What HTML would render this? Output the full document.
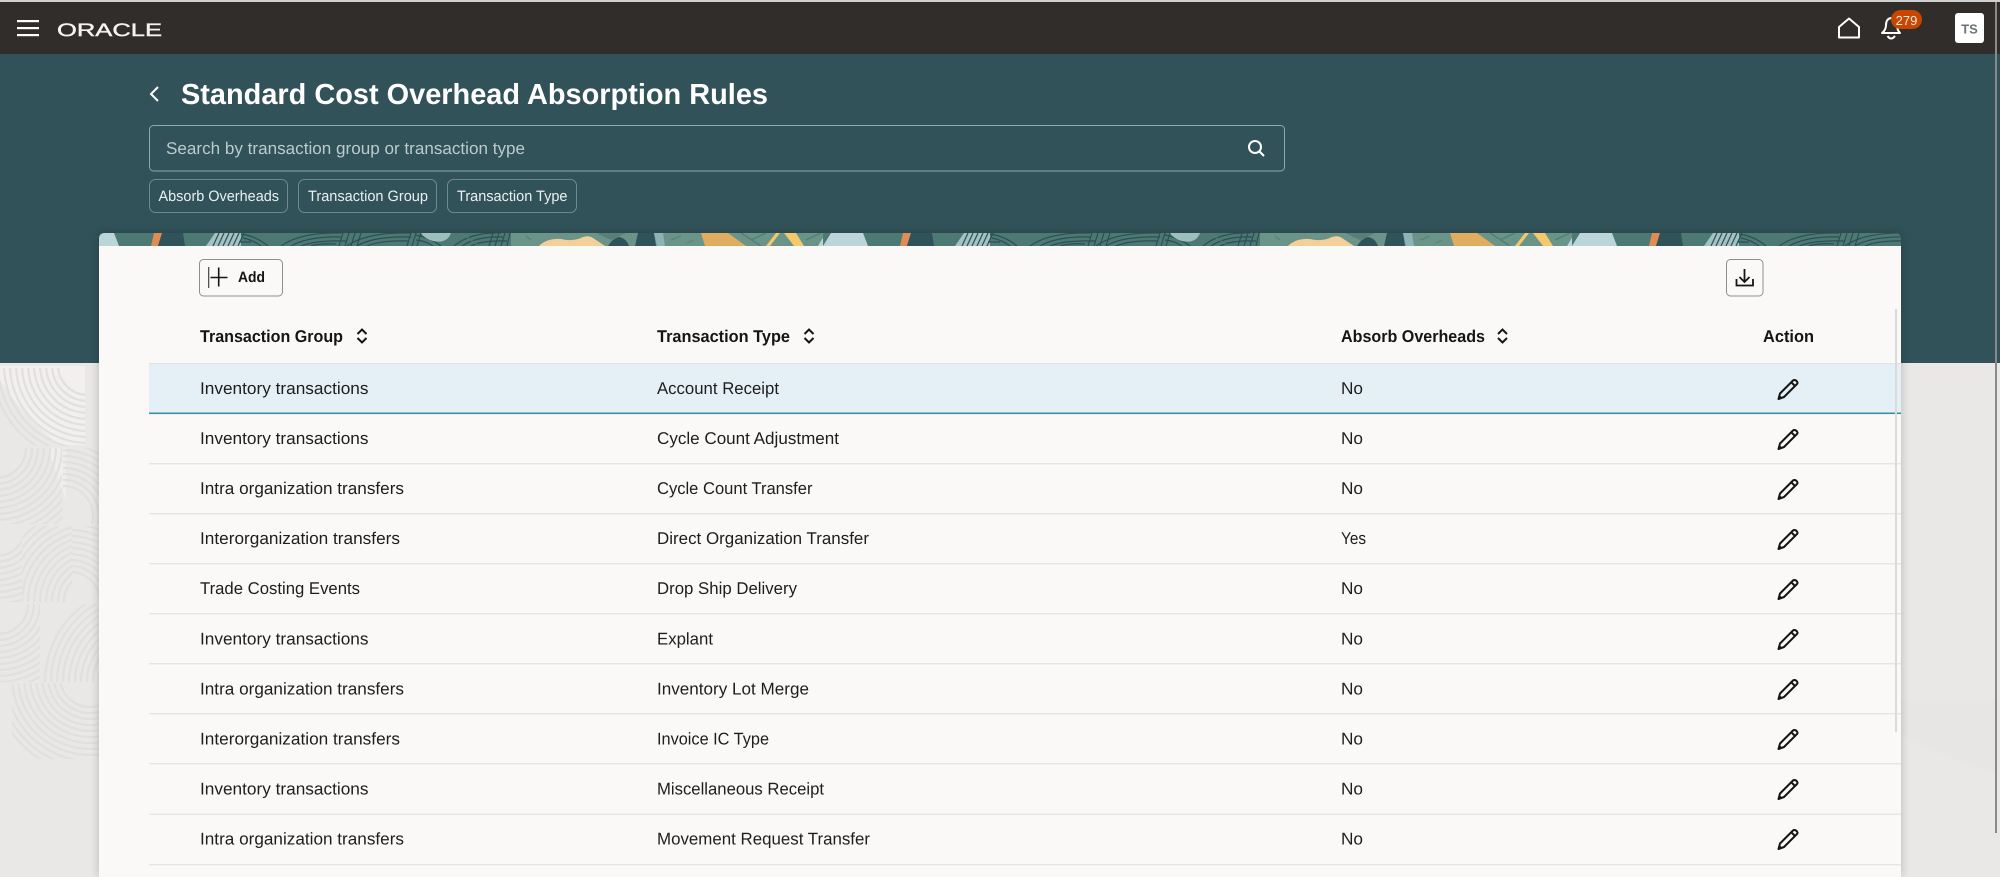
<!DOCTYPE html>
<html lang="en">
<head>
<meta charset="utf-8">
<title>Standard Cost Overhead Absorption Rules</title>
<style>
html,body{margin:0;padding:0;width:2000px;height:877px;overflow:hidden;background:#e9e8e6;font-family:"Liberation Sans",sans-serif}
svg.layer{position:absolute;left:0;top:0;display:block}
text{font-family:"Liberation Sans",sans-serif;text-rendering:geometricPrecision}
.r{font-size:17px;fill:#1f1e1c}
.h{font-size:17px;font-weight:bold;fill:#161513}
.c{font-size:15px;fill:#e9efef}
</style>
</head>
<body>
<svg class="layer" width="2000" height="877" viewBox="0 0 2000 877" xmlns="http://www.w3.org/2000/svg">
<defs>
  <g id="rings" fill="none" stroke="#e1e0de" stroke-width="2.2">
    <circle r="30"/><circle r="36"/><circle r="42"/><circle r="48"/><circle r="54"/><circle r="60"/><circle r="66"/><circle r="72"/><circle r="78"/><circle r="84"/><circle r="90"/><circle r="96"/>
  </g>
  <g id="sort" fill="none" stroke="#161513" stroke-width="2">
    <path d="M-4.5 -2 L0 -6.5 L4.5 -2"/>
    <path d="M-4.5 2 L0 6.5 L4.5 2"/>
  </g>
  <g id="pencil">
    <path d="M-9.5 9.5 L-8 4 L5 -9 Q6.5 -10 8 -9 L9 -8 Q10 -6.5 9 -5.5 L-4 7.5 Z" fill="none" stroke="#161513" stroke-width="2" stroke-linejoin="round"/>
    <path d="M3.5 -7 L7 -3.5" stroke="#161513" stroke-width="2" fill="none"/>
    <path d="M-9.5 9.5 L-8.5 5.5 L-5.5 8.5 Z" fill="#161513"/>
  </g>
  <clipPath id="bannerClip"><path d="M99 246 V239 Q99 233 105 233 H1895 Q1901 233 1901 239 V246 Z"/></clipPath>
  <g id="tile">
    <rect x="823" y="233" width="437" height="13" fill="#4c7a73"/>
    <rect x="1260" y="233" width="313" height="13" fill="#6b9489"/>
    <path d="M831 233 H863 L868 246 H823 Z" fill="#bcd5d8"/>
    <path d="M903 233 H911 L907 246 H900 Z" fill="#e28c55"/>
    <path d="M911 233 H932 L934 246 H907 Z" fill="#2f5358"/>
    <path d="M964 233 H990 V246 H955 Z" fill="#a3c2c1"/>
    <g fill="none" stroke="#2c4f54" stroke-width="1.2">
      <path d="M962 246 L968 233 M967 246 L973 233 M972 246 L978 233 M977 246 L983 233 M982 246 L988 233 M987 246 L993 233"/>
      <path d="M990 234 Q1005 236 1017 246 M992 238 Q1002 240 1010 246 M988 242 H1000"/>
      <path d="M1030 246 Q1050 232 1090 233 M1040 246 Q1058 236 1090 237 M1050 246 Q1065 240 1095 241 M1060 246 Q1070 243 1085 244"/>
      <path d="M1092 233 L1088 246 M1098 233 L1094 246 M1104 233 L1100 246 M1110 233 L1106 246"/>
      <path d="M1096 246 Q1115 232 1160 233 M1106 246 Q1122 236 1160 237 M1116 246 Q1130 240 1158 241"/>
      <path d="M1160 233 L1156 246 M1165 233 L1161 246 M1170 233 L1166 246"/>
      <path d="M1165 235 Q1180 238 1190 246 M1165 240 Q1175 241 1182 246"/>
      <path d="M1203 246 Q1220 232 1250 233 M1211 246 Q1226 236 1252 237 M1220 246 Q1232 240 1256 241"/>
      <path d="M1242 233 L1238 246 M1248 233 L1244 246 M1254 233 L1250 246 M1259 233 L1256 246"/>
    </g>
    <path d="M1170 233 H1200 Q1196 244 1182 241 Q1174 239 1170 233 Z" fill="#9dbfbd"/>
    <path d="M1288 246 Q1296 238 1310 239 Q1322 242 1332 237 Q1338 235 1342 238 Q1348 242 1354 246 Z" fill="#f3cf9a"/>
    <path d="M1357 246 Q1362 238 1368 237 Q1375 238 1378 246 Z" fill="#2f5358"/>
    <path d="M1345 233 H1375 L1360 240 Z" fill="#557f78"/>
    <path d="M1387 233 H1403 L1405 246 H1384 Z" fill="#2f5358"/>
    <path d="M1403 233 H1412 L1414 246 H1406 Z" fill="#8db3b5"/>
    <path d="M1450 233 H1477 L1495 246 H1454 Z" fill="#e0ac60"/>
    <path d="M1515 246 L1525 233 H1529 L1519 246 Z" fill="#f4c86b"/>
    <path d="M1533 233 H1545 L1553 246 H1543 Z" fill="#f4c86b"/>
    <path d="M1500 240 L1515 233 M1490 233 L1510 246 M1555 240 L1570 233" stroke="#517f78" stroke-width="1.5" fill="none"/>
    <path d="M1567 246 L1573 236 V246 Z" fill="#bcd5d8"/>
    <path d="M1210 233 L1228 246 M1275 236 L1280 240 M1420 240 L1430 236 M1436 243 L1442 240" stroke="#517f78" stroke-width="1.5" fill="none" opacity=".7"/>
  </g>
</defs>

<!-- page background -->
<rect width="2000" height="877" fill="#e9e8e6"/>
<path d="M0 366 H85 V445 H60 Q25 420 0 380 Z" fill="#f2f0ee"/>
<path d="M48 448 H66 L66 500 Q58 480 48 448 Z" fill="#f0eeec"/>
<path d="M1901 735 Q1950 760 1996 772 V700 H1901 Z" fill="#e7e6e4"/>
<svg x="0" y="368" width="85" height="78"><use href="#rings" x="88" y="-3"/></svg>
<svg x="0" y="448" width="62" height="76"><use href="#rings" x="-4" y="0"/></svg>
<svg x="63" y="448" width="36" height="76"><use href="#rings" x="0" y="68"/></svg>
<svg x="0" y="526" width="22" height="76"><use href="#rings" x="-4" y="0"/></svg>
<svg x="22" y="526" width="50" height="76"><use href="#rings" x="72" y="76"/></svg>
<svg x="72" y="526" width="27" height="76"><use href="#rings" x="-2" y="76"/></svg>
<svg x="0" y="604" width="40" height="78"><use href="#rings" x="-2" y="0"/></svg>
<svg x="43" y="604" width="56" height="78"><use href="#rings" x="98" y="78"/></svg>
<svg x="12" y="683" width="87" height="76"><use href="#rings" x="78" y="-6"/></svg>

<!-- teal band and header -->
<rect y="0" width="2000" height="363" fill="#315259"/>
<rect y="0" width="2000" height="2" fill="#cfcfcf"/>
<rect y="2" width="2000" height="52" fill="#312d2a"/>

<!-- header -->
<g fill="#fff">
  <rect x="17" y="20" width="22" height="2.2"/>
  <rect x="17" y="27" width="22" height="2.2"/>
  <rect x="17" y="34" width="22" height="2.2"/>
</g>
<text x="57" y="36" font-size="18" fill="#f4f4f4" stroke="#f4f4f4" stroke-width=".4" textLength="105" lengthAdjust="spacingAndGlyphs">ORACLE</text>

<path d="M1839 37.5 V27 L1849 18.5 L1859 27 V37.5 Z" fill="none" stroke="#fff" stroke-width="2" stroke-linejoin="round"/>
<path d="M1882 33 Q1886 30 1886 25 Q1886 19 1891 18 Q1897 19 1897 25 Q1897 30 1900 33 Z" fill="none" stroke="#fff" stroke-width="2" stroke-linejoin="round"/>
<path d="M1887.5 36 Q1891 41 1895 36" fill="none" stroke="#fff" stroke-width="2"/>
<rect x="1891" y="10" width="31" height="19" rx="9.5" fill="#c74600"/>
<text x="1906.5" y="25" font-size="13" fill="#f6e6dc" text-anchor="middle">279</text>
<rect x="1955" y="13" width="29" height="30" rx="3" fill="#fff"/>
<text x="1969.5" y="33.5" font-size="13" font-weight="bold" fill="#6a7578" text-anchor="middle">TS</text>

<!-- title -->
<path d="M158 87 L151 94 L158 101" fill="none" stroke="#fff" stroke-width="2"/>
<text x="181" y="104" font-size="29" font-weight="bold" fill="#fff" textLength="587" lengthAdjust="spacingAndGlyphs">Standard Cost Overhead Absorption Rules</text>

<!-- search -->
<rect x="149.5" y="125.5" width="1135" height="45.5" rx="4" fill="none" stroke="#93a8ab" stroke-width="1"/>
<text x="166" y="154" font-size="17" fill="#bccacc" textLength="359" lengthAdjust="spacingAndGlyphs">Search by transaction group or transaction type</text>
<circle cx="1255" cy="147" r="6" fill="none" stroke="#fff" stroke-width="2"/>
<path d="M1259.5 151.5 L1264 156" stroke="#fff" stroke-width="2"/>

<!-- chips -->
<g fill="none" stroke="#6f8a8e" stroke-width="1">
  <rect x="149.5" y="179.5" width="138" height="33" rx="6"/>
  <rect x="298.5" y="179.5" width="138" height="33" rx="6"/>
  <rect x="447.5" y="179.5" width="129" height="33" rx="6"/>
</g>
<text class="c" x="158.5" y="201" textLength="120.5" lengthAdjust="spacingAndGlyphs">Absorb Overheads</text>
<text class="c" x="308" y="201" textLength="120" lengthAdjust="spacingAndGlyphs">Transaction Group</text>
<text class="c" x="457" y="201" textLength="110.5" lengthAdjust="spacingAndGlyphs">Transaction Type</text>
</svg>

<div style="position:absolute;left:99px;top:233px;width:1802px;height:644px;border-radius:6px 6px 0 0;box-shadow:0 0 9px rgba(0,0,0,.22)"></div>

<svg class="layer" width="2000" height="877" viewBox="0 0 2000 877" xmlns="http://www.w3.org/2000/svg">
<!-- card -->
<g clip-path="url(#bannerClip)">
  <use href="#tile" x="-749"/>
  <use href="#tile"/>
  <use href="#tile" x="749"/>
</g>
<rect x="99" y="246" width="1802" height="631" fill="#fbf9f8"/>

<!-- toolbar -->
<rect x="199.5" y="259.5" width="83" height="36.5" rx="4" fill="none" stroke="#8f8e8b" stroke-width="1"/>
<rect x="208" y="267" width="1.3" height="21" fill="#55524e"/>
<path d="M210.5 277.5 H227.5 M218.7 267.5 V286.5" stroke="#161513" stroke-width="1.6" fill="none"/>
<text x="238" y="282" font-size="15" font-weight="bold" fill="#161513" textLength="27" lengthAdjust="spacingAndGlyphs">Add</text>
<rect x="1726.5" y="259.5" width="36.5" height="36.5" rx="4" fill="none" stroke="#8f8e8b" stroke-width="1"/>
<path d="M1744.5 269 V282 M1739.5 277 L1744.5 282 L1749.5 277" fill="none" stroke="#161513" stroke-width="1.8"/>
<path d="M1736.5 279 V285.5 H1753 V279" fill="none" stroke="#161513" stroke-width="1.8"/>

<!-- table header -->
<text class="h" x="200" y="342" textLength="143" lengthAdjust="spacingAndGlyphs">Transaction Group</text>
<use href="#sort" x="362" y="336"/>
<text class="h" x="657" y="342" textLength="133" lengthAdjust="spacingAndGlyphs">Transaction Type</text>
<use href="#sort" x="809" y="336"/>
<text class="h" x="1341" y="342" textLength="144" lengthAdjust="spacingAndGlyphs">Absorb Overheads</text>
<use href="#sort" x="1502.5" y="336"/>
<text class="h" x="1763" y="342" textLength="51" lengthAdjust="spacingAndGlyphs">Action</text>

<!-- selected row -->
<rect x="149" y="364" width="1752" height="49" fill="#e4f0f6"/>
<rect x="149" y="363" width="1752" height="1" fill="#e3e2df"/>
<rect x="149" y="412.5" width="1752" height="1.6" fill="#3f8ba4"/>

<!-- rules -->
<g fill="#e7e5e2">
  <rect x="149" y="463" width="1752" height="1.4"/>
  <rect x="149" y="513" width="1752" height="1.4"/>
  <rect x="149" y="563" width="1752" height="1.4"/>
  <rect x="149" y="613" width="1752" height="1.4"/>
  <rect x="149" y="663" width="1752" height="1.4"/>
  <rect x="149" y="713" width="1752" height="1.4"/>
  <rect x="149" y="763" width="1752" height="1.4"/>
  <rect x="149" y="813.5" width="1752" height="1.4"/>
  <rect x="149" y="864" width="1752" height="1.4"/>
</g>

<!-- rows -->
<text class="r" x="200" y="394" textLength="168.5" lengthAdjust="spacingAndGlyphs">Inventory transactions</text>
<text class="r" x="657" y="394" textLength="122" lengthAdjust="spacingAndGlyphs">Account Receipt</text>
<text class="r" x="1341" y="394" textLength="22" lengthAdjust="spacingAndGlyphs">No</text>
<use href="#pencil" x="1788" y="389.5"/>

<text class="r" x="200" y="444" textLength="168.5" lengthAdjust="spacingAndGlyphs">Inventory transactions</text>
<text class="r" x="657" y="444" textLength="182" lengthAdjust="spacingAndGlyphs">Cycle Count Adjustment</text>
<text class="r" x="1341" y="444" textLength="22" lengthAdjust="spacingAndGlyphs">No</text>
<use href="#pencil" x="1788" y="439.5"/>

<text class="r" x="200" y="494" textLength="204" lengthAdjust="spacingAndGlyphs">Intra organization transfers</text>
<text class="r" x="657" y="494" textLength="155.5" lengthAdjust="spacingAndGlyphs">Cycle Count Transfer</text>
<text class="r" x="1341" y="494" textLength="22" lengthAdjust="spacingAndGlyphs">No</text>
<use href="#pencil" x="1788" y="489.5"/>

<text class="r" x="200" y="544" textLength="200" lengthAdjust="spacingAndGlyphs">Interorganization transfers</text>
<text class="r" x="657" y="544" textLength="212" lengthAdjust="spacingAndGlyphs">Direct Organization Transfer</text>
<text class="r" x="1341" y="544" textLength="25" lengthAdjust="spacingAndGlyphs">Yes</text>
<use href="#pencil" x="1788" y="539.5"/>

<text class="r" x="200" y="594" textLength="160" lengthAdjust="spacingAndGlyphs">Trade Costing Events</text>
<text class="r" x="657" y="594" textLength="140" lengthAdjust="spacingAndGlyphs">Drop Ship Delivery</text>
<text class="r" x="1341" y="594" textLength="22" lengthAdjust="spacingAndGlyphs">No</text>
<use href="#pencil" x="1788" y="589.5"/>

<text class="r" x="200" y="644.5" textLength="168.5" lengthAdjust="spacingAndGlyphs">Inventory transactions</text>
<text class="r" x="657" y="644.5" textLength="56" lengthAdjust="spacingAndGlyphs">Explant</text>
<text class="r" x="1341" y="644.5" textLength="22" lengthAdjust="spacingAndGlyphs">No</text>
<use href="#pencil" x="1788" y="639.5"/>

<text class="r" x="200" y="694.5" textLength="204" lengthAdjust="spacingAndGlyphs">Intra organization transfers</text>
<text class="r" x="657" y="694.5" textLength="152" lengthAdjust="spacingAndGlyphs">Inventory Lot Merge</text>
<text class="r" x="1341" y="694.5" textLength="22" lengthAdjust="spacingAndGlyphs">No</text>
<use href="#pencil" x="1788" y="689.5"/>

<text class="r" x="200" y="744.5" textLength="200" lengthAdjust="spacingAndGlyphs">Interorganization transfers</text>
<text class="r" x="657" y="744.5" textLength="112" lengthAdjust="spacingAndGlyphs">Invoice IC Type</text>
<text class="r" x="1341" y="744.5" textLength="22" lengthAdjust="spacingAndGlyphs">No</text>
<use href="#pencil" x="1788" y="739.5"/>

<text class="r" x="200" y="794.5" textLength="168.5" lengthAdjust="spacingAndGlyphs">Inventory transactions</text>
<text class="r" x="657" y="794.5" textLength="167" lengthAdjust="spacingAndGlyphs">Miscellaneous Receipt</text>
<text class="r" x="1341" y="794.5" textLength="22" lengthAdjust="spacingAndGlyphs">No</text>
<use href="#pencil" x="1788" y="789.5"/>

<text class="r" x="200" y="844.5" textLength="204" lengthAdjust="spacingAndGlyphs">Intra organization transfers</text>
<text class="r" x="657" y="844.5" textLength="213" lengthAdjust="spacingAndGlyphs">Movement Request Transfer</text>
<text class="r" x="1341" y="844.5" textLength="22" lengthAdjust="spacingAndGlyphs">No</text>
<use href="#pencil" x="1788" y="839.5"/>

<!-- scrollbars -->
<rect x="1895" y="309" width="2" height="423" fill="#d9dadb"/>
<rect x="1995" y="2" width="2" height="831" fill="#8a8a88"/>
</svg>
</body>
</html>
